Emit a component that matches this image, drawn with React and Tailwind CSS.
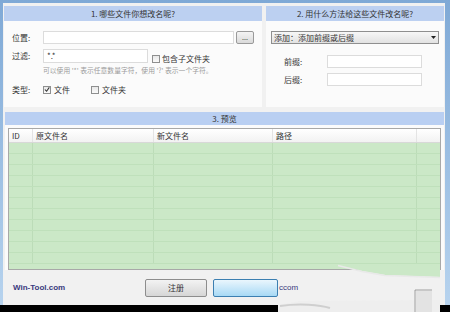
import React from 'react';

const Check = ({ checked }) => (
  <span className="w-[8px] h-[8px] border border-[#8e8f8f] bg-gradient-to-b from-[#e8e8e8] to-[#fafafa] flex items-center justify-center">
    {checked && (
      <svg width="7" height="7" viewBox="0 0 7 7">
        <path d="M1 3.5 L3 5.5 L6.2 1" stroke="#333" strokeWidth="1.2" fill="none" />
      </svg>
    )}
  </span>
);

export default function App() {
  const cols = [
    { w: 'w-[24px]', t: 'ID' },
    { w: 'w-[121px]', t: '原文件名' },
    { w: 'w-[119px]', t: '新文件名' },
    { w: 'w-[144px]', t: '路径' },
    { w: 'flex-1', t: '' },
  ];
  return (
    <div className="w-[450px] h-[312px] bg-black relative overflow-hidden text-[#333] text-[8px] leading-none" style={{ fontFamily: '"Noto Sans CJK SC", "Liberation Sans", sans-serif' }}>
      <div className="h-[305px] bg-gradient-to-b from-[#7fa9d6] to-[#b7d3ee] pt-[3px] pl-[3px] pr-[5px] flex flex-col">
        <div className="flex-1 bg-[#f1f1f1] flex flex-col pt-[3px] pl-[1px]">
          {/* top panels */}
          <div className="flex gap-[4px] h-[101px]">
            <div className="w-[258px] bg-[#fbfbfb] flex flex-col">
              <div className="h-[15px] bg-[#bcd0f1] flex items-center justify-center">1. 哪些文件你想改名呢?</div>
              <div className="flex flex-col pl-[8px] pt-[10px]">
                <div className="flex items-center h-[13px]">
                  <span className="w-[31px]">位置:</span>
                  <span className="w-[191px] h-[13px] border border-[#dcdcdc] bg-white"></span>
                  <span className="ml-[2px] w-[18px] h-[13px] border border-[#9a9a9a] rounded-[2px] bg-gradient-to-b from-[#f4f4f4] to-[#dadada] flex items-center justify-center text-[7px]">...</span>
                </div>
                <div className="flex items-center h-[14px] mt-[5px]">
                  <span className="w-[31px]">过滤:</span>
                  <span className="w-[105px] h-[14px] border border-[#dcdcdc] bg-white pl-[3px] pt-[2px]">*.*</span>
                  <span className="ml-[4px] mt-[6px] flex items-center gap-[2px]"><Check /> 包含子文件夹</span>
                </div>
                <div className="pl-[31px] mt-[4px] text-[6.8px] text-[#9b9b9b]">可以使用 '*' 表示任意数量字符，使用 '?' 表示一个字符。</div>
                <div className="flex items-center mt-[12px]">
                  <span className="w-[31px]">类型:</span>
                  <span className="flex items-center gap-[3px] w-[48px]"><Check checked /> 文件</span>
                  <span className="flex items-center gap-[3px]"><Check /> 文件夹</span>
                </div>
              </div>
            </div>
            <div className="w-[178px] bg-[#fbfbfb] flex flex-col">
              <div className="h-[15px] bg-[#bcd0f1] flex items-center justify-center">2. 用什么方法给这些文件改名呢?</div>
              <div className="mx-[5px] mt-[10px] h-[13px] border border-[#8f8f8f] bg-gradient-to-b from-[#f7f7f7] to-[#e2e2e2] flex items-center justify-between px-[2px]">
                <span>添加：添加前缀或后缀</span>
                <svg width="5" height="3" viewBox="0 0 5 3"><path d="M0 0 H5 L2.5 3 Z" fill="#222" /></svg>
              </div>
              <div className="flex items-center mt-[11px] pl-[18px]">
                <span className="w-[43px]">前缀:</span>
                <span className="w-[95px] h-[13px] border border-[#dcdcdc] bg-white"></span>
              </div>
              <div className="flex items-center mt-[5px] pl-[18px]">
                <span className="w-[43px]">后缀:</span>
                <span className="w-[95px] h-[13px] border border-[#dcdcdc] bg-white"></span>
              </div>
            </div>
          </div>
          {/* preview */}
          <div className="mt-[5px] ml-[1px] mr-[1px] bg-[#fbfbfb] flex flex-col h-[158px]">
            <div className="h-[13px] bg-[#b9cff2] flex items-center justify-center">3. 预览</div>
            <div className="mx-[3px] mt-[3px] flex-1 border border-[#a8a8a8] flex flex-col bg-[#cbe8c7]">
              <div className="h-[14px] flex bg-gradient-to-b from-white to-[#f2f2f2] border-b border-[#d8d8d8]">
                {cols.map((c, i) => (
                  <div key={i} className={`${c.w} h-full flex items-center pl-[3px] ${i < 4 ? 'border-r border-[#e4e4e4]' : ''}`}>{c.t}</div>
                ))}
              </div>
              <div className="flex-1 flex flex-col">
                {Array.from({ length: 11 }).map((_, r) => (
                  <div key={r} className="h-[11px] flex border-b border-[#bfe0bb]">
                    {cols.map((c, i) => (
                      <div key={i} className={`${c.w} h-full ${i < 4 ? 'border-r border-[#bcdcb8]' : ''}`}></div>
                    ))}
                  </div>
                ))}
              </div>
            </div>
          </div>
          {/* bottom */}
          <div className="flex-1 flex items-center pl-[9px]">
            <span className="w-[132px] text-[#39397d] font-bold text-[8px]" style={{ fontFamily: '"Liberation Sans", sans-serif' }}>Win-Tool.com</span>
            <span className="w-[62px] h-[18px] border border-[#8d8d8d] rounded-[2px] bg-gradient-to-b from-[#f3f3f3] to-[#d6d6d6] flex items-center justify-center">注册</span>
            <span className="ml-[6px] w-[65px] h-[18px] border border-[#3c7fb1] rounded-[2px] bg-gradient-to-b from-[#eaf6fd] to-[#a7d9f5]"></span>
            <span className="text-[#39397d] text-[8px] ml-[1px]" style={{ fontFamily: '"Liberation Sans", sans-serif' }}>ccom</span>
          </div>
        </div>
      </div>
      {/* torn screenshot piece */}
      <svg className="absolute left-0 top-0" width="450" height="312" viewBox="0 0 450 312">
        <path d="M338 265 L362 271 L385 275 L440 277 L440 266 Z" fill="#cbe8c7" />
        <path d="M338 265.5 L362 271.5 L385 275.5 L440 277.5" stroke="#e9e9e9" strokeWidth="1.5" fill="none" />
        <path d="M278 305 L278 312 L440 312 L440 300 L300 301 Z" fill="#eeeeee" />
        <path d="M280 306 C300 303 320 305 330 308" stroke="#cfcfcf" strokeWidth="2" fill="none" />
        <path d="M415 312 L415 290 L432 290" fill="none" stroke="#8c8c8c" strokeWidth="0.8" />
        <rect x="416" y="291" width="16" height="21" fill="#e3e3e3" />
      </svg>
    </div>
  );
}
